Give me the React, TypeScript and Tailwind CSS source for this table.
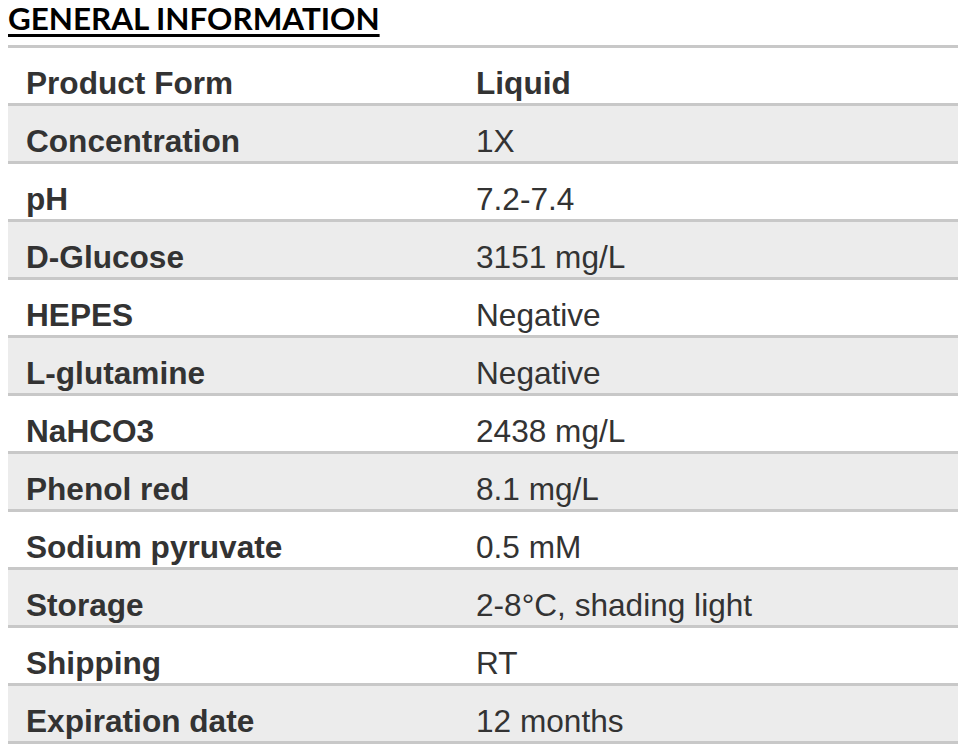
import React from 'react';

const rows: { label: string; value: string; boldValue?: boolean }[] = [
  { label: 'Product Form', value: 'Liquid', boldValue: true },
  { label: 'Concentration', value: '1X' },
  { label: 'pH', value: '7.2-7.4' },
  { label: 'D-Glucose', value: '3151 mg/L' },
  { label: 'HEPES', value: 'Negative' },
  { label: 'L-glutamine', value: 'Negative' },
  { label: 'NaHCO3', value: '2438 mg/L' },
  { label: 'Phenol red', value: '8.1 mg/L' },
  { label: 'Sodium pyruvate', value: '0.5 mM' },
  { label: 'Storage', value: '2-8°C, shading light' },
  { label: 'Shipping', value: 'RT' },
  { label: 'Expiration date', value: '12 months' },
];

export default function App() {
  return (
    <div className="w-[965px] h-[754px] bg-white overflow-hidden pl-2 pt-[3px]">
      <h1 className="font-['Lato',sans-serif] font-bold text-[31.4px] leading-none text-black underline decoration-[3px] underline-offset-[4px] h-[42px]">
        GENERAL INFORMATION
      </h1>
      <div className="w-[950px] font-['Liberation_Sans',Arial,sans-serif] text-[31.6px] leading-none text-[#333333] border-b-[3px] border-[#c8c8c8]">
        {rows.map((r, i) => (
          <div
            key={r.label}
            className={`flex h-[58px] border-t-[3px] border-[#c8c8c8] pt-[20px] ${i % 2 === 1 ? 'bg-[#ececec]' : 'bg-white'}`}
          >
            <div className="w-[468px] pl-[18px] font-bold">{r.label}</div>
            <div className={r.boldValue ? 'font-bold' : ''}>{r.value}</div>
          </div>
        ))}
      </div>
    </div>
  );
}
